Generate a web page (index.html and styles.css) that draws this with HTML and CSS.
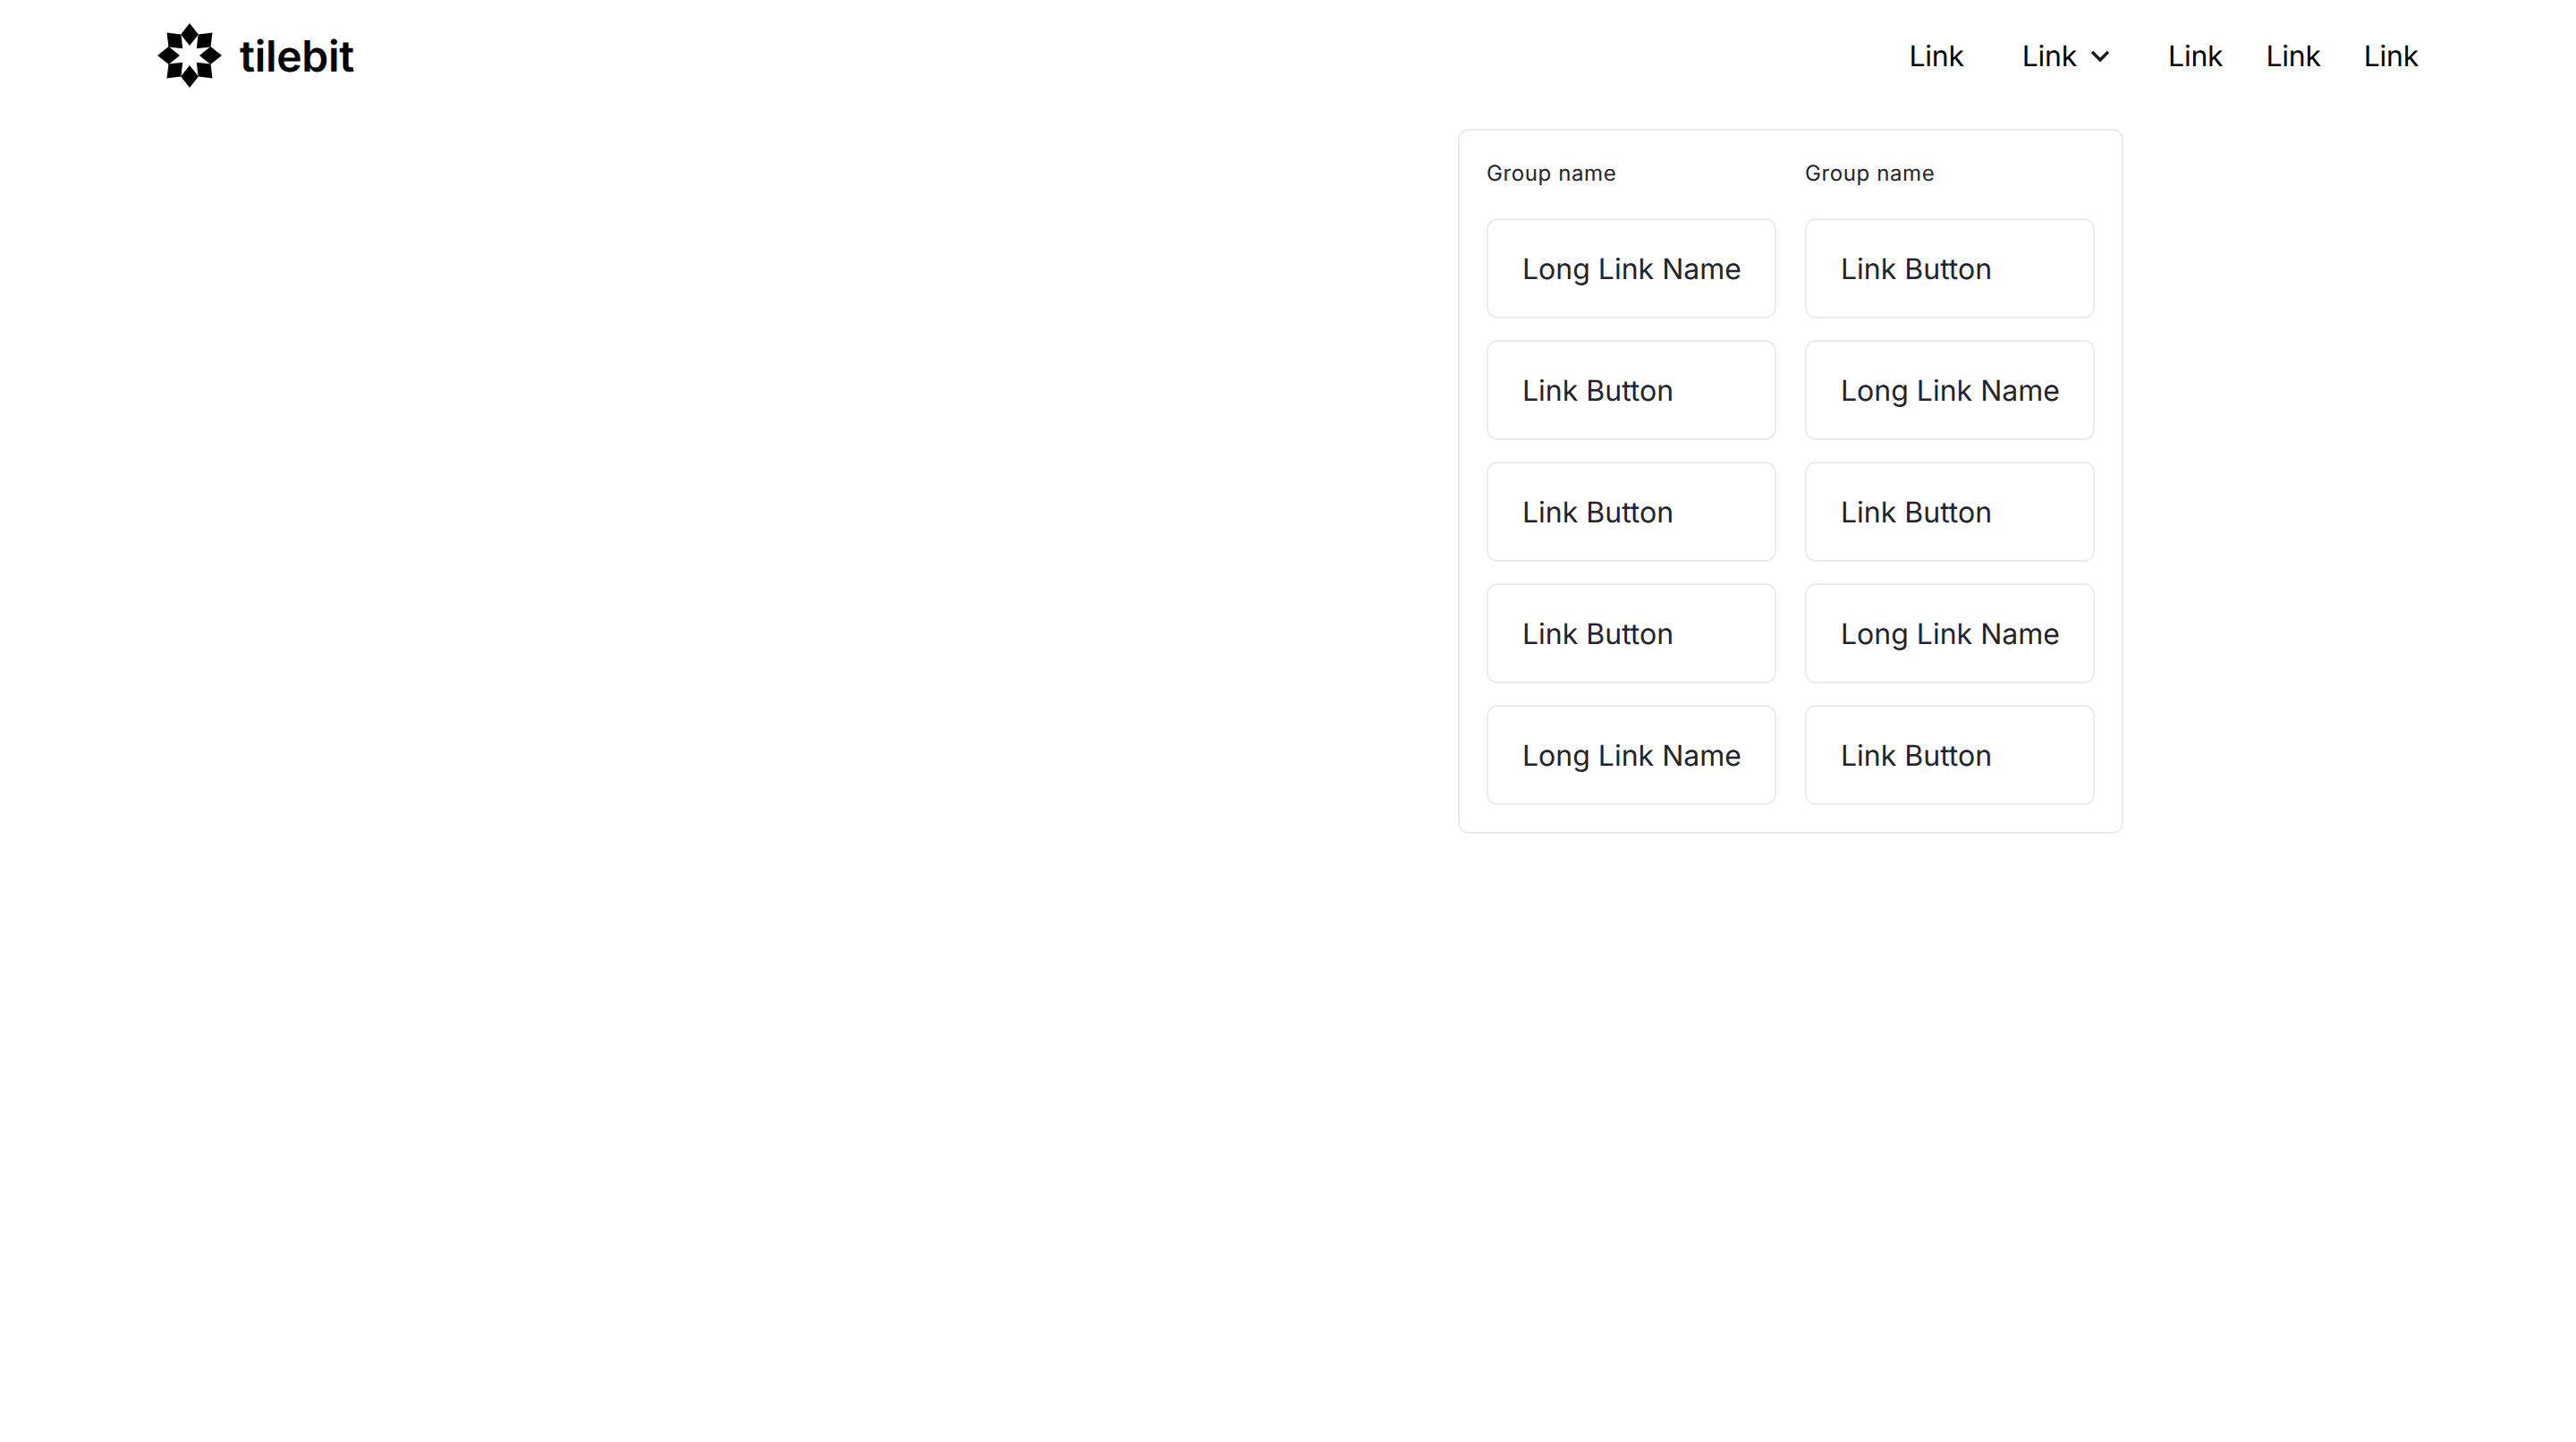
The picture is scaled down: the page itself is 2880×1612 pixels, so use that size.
FILE: index.html
```html
<!DOCTYPE html>
<html lang="en">
<head>
<meta charset="utf-8">
<title>tilebit</title>
<link rel="stylesheet" href="styles.css">
</head>
<body>
<header class="navbar">
  <a class="brand" href="#">
    <svg class="brand-mark" viewBox="-36 -36 72 72" aria-hidden="true">
      <defs><path id="petal" d="M0 -36 L9.9 -23.4 L0 -11 L-9.9 -23.4 Z"/></defs>
      <use href="#petal"/>
      <use href="#petal" transform="rotate(45)"/>
      <use href="#petal" transform="rotate(90)"/>
      <use href="#petal" transform="rotate(135)"/>
      <use href="#petal" transform="rotate(180)"/>
      <use href="#petal" transform="rotate(225)"/>
      <use href="#petal" transform="rotate(270)"/>
      <use href="#petal" transform="rotate(315)"/>
    </svg>
    <span class="brand-name">tilebit</span>
  </a>
  <nav class="nav">
    <a class="nav-link" href="#">Link</a>
    <a class="nav-link nav-link-drop" href="#">Link
      <svg class="chevron" viewBox="0 0 24 24" aria-hidden="true"><path d="M3 7 L12 16 L21 7"/></svg>
    </a>
    <a class="nav-link" href="#">Link</a>
    <a class="nav-link" href="#">Link</a>
    <a class="nav-link" href="#">Link</a>
  </nav>
</header>
<div class="menu-wrap">
  <div class="menu">
    <section class="group">
      <h3 class="group-name">Group name</h3>
      <a class="tile" href="#">Long Link Name</a>
      <a class="tile" href="#">Link Button</a>
      <a class="tile" href="#">Link Button</a>
      <a class="tile" href="#">Link Button</a>
      <a class="tile" href="#">Long Link Name</a>
    </section>
    <section class="group">
      <h3 class="group-name">Group name</h3>
      <a class="tile" href="#">Link Button</a>
      <a class="tile" href="#">Long Link Name</a>
      <a class="tile" href="#">Link Button</a>
      <a class="tile" href="#">Long Link Name</a>
      <a class="tile" href="#">Link Button</a>
    </section>
  </div>
</div>
</body>
</html>
```
FILE: styles.css
```css
* { box-sizing: border-box; }
html, body { margin: 0; padding: 0; background: #fff; }
body {
  font-family: Inter, "Liberation Sans", sans-serif;
  color: #14151f;
  min-height: 1612px;
  text-rendering: geometricPrecision;
}
a { color: inherit; text-decoration: none; }

.navbar {
  display: flex;
  justify-content: space-between;
  align-items: center;
  height: 124px;
  padding: 2px 176px 0;
}
.brand { display: flex; align-items: center; gap: 20px; color: #000; }
.brand-mark { width: 72px; height: 72px; display: block; fill: #000; margin-top: -2px; }
.brand-name { font-size: 48px; font-weight: 600; letter-spacing: -0.3px; line-height: 1; }

.nav { display: flex; align-items: center; color: #000; font-size: 32px; font-weight: 400; letter-spacing: -0.25px; }
.nav-link { display: flex; align-items: center; margin-left: 48px; line-height: 40px; }
.nav-link-drop { margin-left: 65px; margin-right: 16px; gap: 14px; }
.chevron { width: 24px; height: 24px; fill: none; stroke: #1a1a22; stroke-width: 3.4; }

.menu-wrap { padding-left: 1630px; margin-top: 20px; }
.menu {
  display: inline-flex;
  gap: 32px;
  padding: 30px;
  border: 2px solid #ececee;
  border-radius: 12px;
}
.group { display: flex; flex-direction: column; width: 324px; }
.group-name {
  margin: 0 0 32px;
  font-size: 24px;
  font-weight: 400;
  line-height: 36px;
  letter-spacing: 0.6px;
  color: #22232c;
}
.tile {
  display: flex;
  align-items: center;
  height: 112px;
  margin-bottom: 24px;
  padding: 0 38px;
  border: 2px solid #ececee;
  border-radius: 12px;
  font-size: 32px;
  font-weight: 400;
  color: #22232c;
  white-space: nowrap;
}
.tile:last-child { margin-bottom: 0; }
```
